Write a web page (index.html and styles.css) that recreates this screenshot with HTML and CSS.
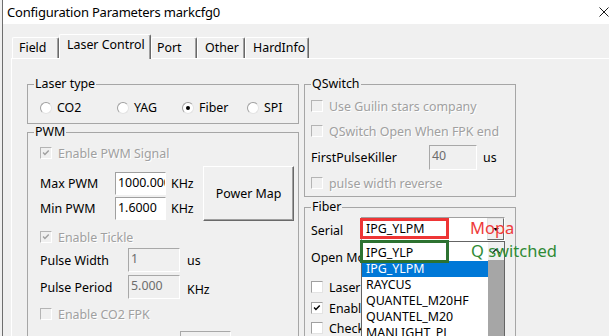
FILE: index.html
```html
<!DOCTYPE html>
<html lang="en">
<head>
  <meta charset="UTF-8">
  <title>Configuration Parameters markcfg0</title>
  <link rel="stylesheet" href="styles.css">
</head>
<body>

  <div class="window">
    <div class="titlebar">
      <span class="title">Configuration Parameters markcfg0</span>
      <svg class="close" width="10" height="10" viewBox="0 0 10 10"><path d="M0.5 0.5L9.5 9.5M9.5 0.5L0.5 9.5" stroke="#1a1a1a" stroke-width="1"/></svg>
    </div>

    <div class="tabs">
      <div class="tab tab-field">Field</div>
      <div class="tab tab-laser active">Laser Control</div>
      <div class="tab tab-port">Port</div>
      <div class="tab tab-other">Other</div>
      <div class="tab tab-hard">HardInfo</div>
    </div>

    <div class="tabpanel">
      <div class="col-left">
        <fieldset class="group laser-type">
          <legend>Laser type</legend>
          <div class="radios">
            <div class="radio"><span class="circle"></span>CO2</div>
            <div class="radio"><span class="circle"></span>YAG</div>
            <div class="radio on"><span class="circle"></span>Fiber</div>
            <div class="radio"><span class="circle"></span>SPI</div>
          </div>
        </fieldset>

        <fieldset class="group pwm">
          <legend>PWM</legend>
          <div class="group-body">
            <div class="check disabled first"><span class="box"><svg viewBox="0 0 12 12"><path d="M2.5 5.5l2.2 2.2 4.6-4.6" fill="none" stroke="#a0a0a0" stroke-width="1.8"/></svg></span>Enable PWM Signal</div>

            <div class="freq">
              <div class="freq-rows">
                <div class="field">
                  <span class="lbl">Max PWM</span>
                  <span class="edit">1000.000</span>
                  <span class="unit">KHz</span>
                </div>
                <div class="field">
                  <span class="lbl">Min PWM</span>
                  <span class="edit">1.6000</span>
                  <span class="unit">KHz</span>
                </div>
              </div>
              <div class="btn power-map">Power Map</div>
            </div>

            <div class="check disabled tickle"><span class="box"><svg viewBox="0 0 12 12"><path d="M2.5 5.5l2.2 2.2 4.6-4.6" fill="none" stroke="#a0a0a0" stroke-width="1.8"/></svg></span>Enable Tickle</div>

            <div class="field pulse pulse-width">
              <span class="lbl">Pulse Width</span>
              <span class="edit off">1</span>
              <span class="unit">us</span>
            </div>
            <div class="field pulse pulse-period">
              <span class="lbl">Pulse Period</span>
              <span class="edit off">5.000</span>
              <span class="unit low">KHz</span>
            </div>

            <div class="check disabled co2"><span class="box"></span>Enable CO2 FPK</div>

            <div class="field fpk-time">
              <span class="lbl"></span>
              <span class="edit off"></span>
            </div>
          </div>
        </fieldset>
      </div>

      <div class="col-right">
        <fieldset class="group qswitch">
          <legend>QSwitch</legend>
          <div class="group-body">
            <div class="check disabled first"><span class="box"></span>Use Guilin stars company</div>
            <div class="check disabled spaced"><span class="box"></span>QSwitch Open When FPK end</div>
            <div class="field fpk">
              <span class="lbl">FirstPulseKiller</span>
              <span class="edit off">40</span>
              <span class="unit">us</span>
            </div>
            <div class="check disabled reverse"><span class="box"></span>pulse width reverse</div>
          </div>
        </fieldset>

        <fieldset class="group fiber">
          <legend>Fiber</legend>
          <div class="group-body">
            <div class="field serial">
              <span class="lbl">Serial</span>
              <div class="combo-wrap">
                <div class="combo">
                  <span class="combo-text">IPG_YLPM</span>
                  <span class="combo-btn"><span class="arrow-down"></span></span>
                </div>

                <div class="droplist">
                  <div class="items">
                    <div class="item">IPG_YLP</div>
                    <div class="item selected">IPG_YLPM</div>
                    <div class="item">RAYCUS</div>
                    <div class="item">QUANTEL_M20HF</div>
                    <div class="item">QUANTEL_M20</div>
                    <div class="item">MANLIGHT_PL</div>
                  </div>
                  <div class="scrollbar">
                    <div class="scroll-up"><span class="arrow-up"></span></div>
                    <div class="scroll-thumb"></div>
                  </div>
                </div>

                <div class="mark mark-red"></div>
                <div class="mark mark-green"></div>
                <div class="note note-mopa">Mopa</div>
                <div class="note note-q">Q switched</div>
              </div>
            </div>

            <div class="field open-mode">
              <span class="lbl">Open Mode</span>
            </div>

            <div class="check clip laser"><span class="box"></span>Laser Power Check</div>
            <div class="check clip enable"><span class="box"><svg viewBox="0 0 12 12"><path d="M2.5 5.5l2.2 2.2 4.6-4.6" fill="none" stroke="#000" stroke-width="1.8"/></svg></span>Enable MO Check</div>
            <div class="check clip"><span class="box"></span>Check Laser Alarm</div>
          </div>
        </fieldset>
      </div>
    </div>
  </div>

</body>
</html>
```

FILE: styles.css
```css
body {
  margin: 0;
  background: #f0f0f0;
  font-family: "Noto Sans", "Liberation Sans", sans-serif;
  font-size: 12.4px;
  color: #000;
}

.window {
  width: 606px;
  height: 336px;
  margin-left: 2px;
  border-left: 1px solid #6e6e6e;
  overflow: hidden;
  background: #f0f0f0;
}

/* title bar */
.titlebar {
  display: flex;
  align-items: center;
  justify-content: space-between;
  height: 24px;
  padding-left: 4px;
  background: #fff;
}

.title {
  font-size: 13px;
  letter-spacing: -0.2px;
  line-height: 24px;
}

.close {
  display: block;
  margin-top: -1px;
}

/* tabs */
.tabs {
  display: flex;
  align-items: flex-end;
  height: 24px;
  margin-left: 9px;
  padding-top: 10px;
}

.tab {
  box-sizing: border-box;
  height: 21px;
  padding: 2px 0 0 6px;
  line-height: 15px;
  border: 1px solid;
  border-color: #fff #696969 transparent #fff;
  border-bottom: 0;
  border-radius: 2px 2px 0 0;
  box-shadow: inset -1px 0 #a0a0a0;
}

.tab.active {
  position: relative;
  z-index: 1;
  height: 25px;
  margin-bottom: -1px;
  padding-left: 7px;
  background: #f0f0f0;
}

.tab-field { width: 47px; }
.tab-laser { width: 92px; }
.tab-port { width: 46px; padding-left: 5px; }
.tab-other { width: 48px; padding-left: 7px; }
.tab-hard { width: 64px; padding-left: 7px; }

.tabpanel {
  display: flex;
  gap: 5px;
  height: 300px;
  margin-left: 8px;
  padding: 18px 0 0 15px;
  border-top: 1px solid #fff;
  border-left: 1px solid #fff;
}

.col-left { width: 272px; }
.col-right { width: 212px; }

/* group boxes */
.group {
  margin: 0;
  padding: 0;
  min-width: 0;
  border: 1px solid #a6a6a6;
}

.group legend {
  margin-left: 6px;
  padding: 0 1px;
  line-height: 14px;
}

.col-left .group-body { padding-left: 12px; }
.col-right .group-body { padding-left: 6px; }

.radios {
  display: grid;
  grid-template-columns: 77px 65px 65px auto;
  padding: 8px 0 7px 12px;
  line-height: 17px;
}

.radio {
  display: flex;
  align-items: center;
}

.circle {
  box-sizing: border-box;
  width: 12px;
  height: 12px;
  margin-right: 5px;
  border: 1px solid;
  border-color: #a0a0a0 #e3e3e3 #e3e3e3 #a0a0a0;
  border-radius: 50%;
  background: #fff;
  display: flex;
  align-items: center;
  justify-content: center;
}

.radio.on .circle::after {
  content: "";
  width: 4px;
  height: 4px;
  border-radius: 50%;
  background: #000;
}

.pwm { margin-top: 1px; }

/* check boxes */
.check {
  display: flex;
  align-items: center;
  height: 20px;
}

.check .box {
  box-sizing: border-box;
  flex-shrink: 0;
  width: 12px;
  height: 12px;
  margin-right: 6px;
  border: 1px solid;
  border-color: #a0a0a0 #e3e3e3 #e3e3e3 #a0a0a0;
  background: #fff;
}

.check .box svg {
  display: block;
  width: 10px;
  height: 10px;
}

.check.disabled {
  color: #a0a0a0;
  text-shadow: 1px 1px 0 #fff;
}

.check.disabled .box {
  background: #f0f0f0;
  border-color: #b4b4b4 #fff #fff #b4b4b4;
}

/* labels that run under the open drop-down list */
.check.clip {
  width: 50px;
  overflow: hidden;
  white-space: nowrap;
}

.pwm .check.first { margin-top: 4px; }
.check.tickle { margin-top: 6px; }
.check.co2 { margin-top: 5px; }

/* label + edit rows */
.field {
  display: flex;
  align-items: center;
}

.field .lbl {
  flex-shrink: 0;
  width: 75px;
}

.edit {
  box-sizing: border-box;
  flex-shrink: 0;
  width: 51px;
  height: 23px;
  padding-left: 2px;
  line-height: 19px;
  border: 1px solid;
  border-color: #a0a0a0 #fff #fff #a0a0a0;
  background: #fff;
  overflow: hidden;
  white-space: nowrap;
}

.edit.off {
  background: #f0f0f0;
  color: #6d6d6d;
  border-color: #a8a8a8 #fff #fff #a8a8a8;
}

.unit { margin-left: 5px; }

.freq {
  display: flex;
  margin-top: 3px;
}

.freq-rows {
  display: flex;
  flex-direction: column;
  gap: 2px;
  width: 163px;
  padding-top: 6px;
}

.btn {
  box-sizing: border-box;
  display: flex;
  align-items: center;
  justify-content: center;
  border: 1px solid;
  border-color: #fff #696969 #696969 #fff;
  box-shadow: inset -1px -1px #a0a0a0;
  background: #f0f0f0;
}

.power-map {
  width: 91px;
  height: 55px;
}

.field.pulse .lbl { width: 88px; }
.field.pulse .edit { width: 52px; height: 24px; }
.field.pulse .unit { margin-left: 7px; }
.pulse-width { margin-top: 1px; }
.pulse-period { margin-top: 3px; }
.unit.low { padding-top: 4px; }

.fpk-time { margin-top: 7px; }
.fpk-time .lbl { width: 140px; }
.fpk-time .edit { height: 24px; }

/* qswitch */
.qswitch .check.first { margin-top: 5px; }
.qswitch .check.spaced { margin-top: 5px; }
.field.fpk { margin-top: 4px; }
.field.fpk .lbl { width: 118px; }
.field.fpk .edit { width: 48px; height: 25px; line-height: 20px; }
.field.fpk .unit { margin-left: 6px; }
.check.reverse { margin-top: 3px; }
.qswitch .group-body { padding-bottom: 3px; }

/* fiber */
.fiber { margin-top: 3px; }

.field.serial {
  align-items: flex-start;
  margin-top: 3px;
}

.field.serial .lbl {
  width: 50px;
  padding-top: 4px;
  line-height: 20px;
}

.combo-wrap {
  position: relative;
  width: 144px;
  height: 24px;
}

.combo {
  box-sizing: border-box;
  display: flex;
  height: 24px;
  border: 1px solid;
  border-color: #a0a0a0 #fff #fff #a0a0a0;
  background: #fff;
}

.combo-text {
  flex: 1;
  padding-left: 4px;
  line-height: 22px;
}

.combo-btn {
  box-sizing: border-box;
  width: 17px;
  display: flex;
  align-items: center;
  justify-content: center;
  border: 1px solid;
  border-color: #e3e3e3 #696969 #696969 #e3e3e3;
  background: #f0f0f0;
}

.arrow-down {
  width: 0;
  height: 0;
  border-left: 3px solid transparent;
  border-right: 3px solid transparent;
  border-top: 3px solid #000;
}

.droplist {
  position: absolute;
  z-index: 2;
  top: 24px;
  left: 0;
  box-sizing: border-box;
  display: flex;
  width: 144px;
  height: 110px;
  border: 1px solid #646464;
  background: #fff;
}

.items {
  flex: 1;
  padding-top: 3px;
}

.item {
  height: 16px;
  padding-left: 4px;
  line-height: 16px;
  white-space: nowrap;
}

.item.selected {
  background: #0078d7;
  color: #fff;
}

.scrollbar {
  display: flex;
  flex-direction: column;
  width: 16px;
}

.scroll-up {
  height: 18px;
  display: flex;
  align-items: center;
  justify-content: center;
  background: #f0f0f0;
}

.arrow-up {
  width: 5px;
  height: 5px;
  margin-top: 3px;
  border-left: 1px solid #000;
  border-top: 1px solid #000;
  transform: rotate(45deg);
}

.scroll-thumb {
  flex: 1;
  background: #a6a6a6;
}

/* annotations drawn over the screenshot */
.mark {
  position: absolute;
  z-index: 3;
  left: -1px;
  box-sizing: border-box;
  width: 89px;
  border: 3px solid;
}

.mark-red {
  top: 1px;
  height: 21px;
  border-color: #ee3535;
}

.mark-green {
  top: 23px;
  height: 23px;
  border-color: #2d7231;
}

.note {
  position: absolute;
  z-index: 3;
  left: 109px;
  font-size: 16.5px;
  line-height: 16px;
  white-space: nowrap;
}

.note-mopa {
  top: 3px;
  color: #ee3b3b;
}

.note-q {
  top: 26px;
  left: 110px;
  color: #2f8a35;
}

.open-mode {
  width: 50px;
  height: 20px;
  margin-top: 6px;
  overflow: hidden;
  white-space: nowrap;
}

.check.laser { margin-top: 10px; }
.check.enable { margin-top: 1px; }
```
